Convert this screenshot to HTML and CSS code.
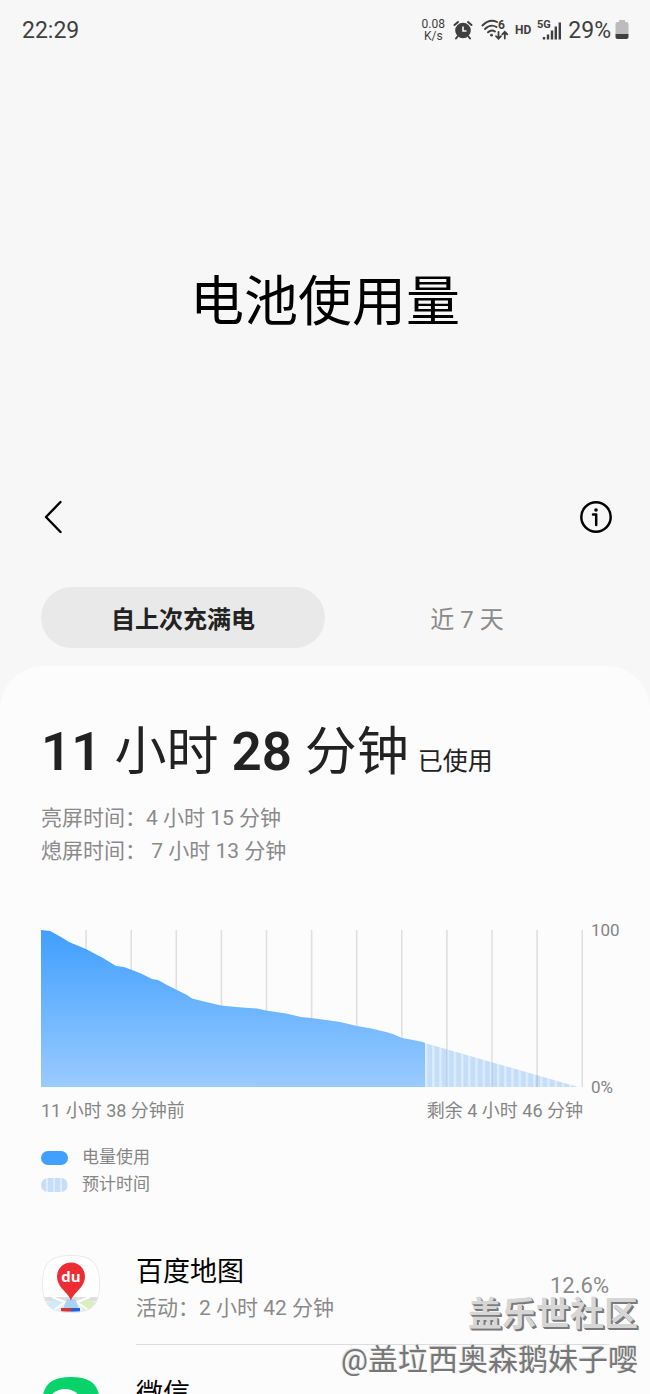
FILE: index.html
```html
<!DOCTYPE html>
<html lang="zh-CN">
<head>
<meta charset="utf-8">
<meta name="viewport" content="width=device-width, initial-scale=1">
<title>电池使用量</title>
<link rel="stylesheet" href="styles.css">
</head>
<body>
<div class="screen">
  <header class="status">
    <time class="status-text">22:29</time>
    <div class="status-icons">
      <span class="speed">0.08<br>K/s</span>
      <svg class="alarm" width="20" height="20" viewBox="0 0 20 20" aria-label="闹钟">
        <circle cx="10" cy="10.5" r="7.8" fill="#3f3f3f"/>
        <path d="M1.5 5 5 2M18.5 5 15 2M4.5 16.500 3 18.500M15.500 16.500 17 18.500" stroke="#3f3f3f" stroke-width="2" stroke-linecap="round"/>
        <path d="M10 6.500V11h3.500" fill="none" stroke="#f7f7f7" stroke-width="1.600"/>
      </svg>
      <svg class="wifi" width="28" height="22" viewBox="0 0 28 22" aria-label="Wi-Fi 6">
        <g fill="none" stroke="#3f3f3f" stroke-width="1.900" stroke-linecap="round">
          <path d="M1.500 6.500Q8.500-.5 16 3"/><path d="M4 10Q9.500 4.500 15.500 8"/><path d="M7 13.300Q10.500 10 14 12.500"/>
          <path d="M17.500 13v6.500M15 17.200l2.500 2.500L20 17.200M23.800 19.500V13M21.300 15.300l2.500-2.500 2.500 2.500" stroke-width="1.800"/>
        </g>
        <circle cx="10.500" cy="16.200" r="1.400" fill="#3f3f3f"/>
        <text class="wifi-gen" x="17" y="10">6</text>
      </svg>
      <span class="hd">HD</span>
      <svg class="signal" width="25" height="22" viewBox="0 0 25 22" aria-label="5G">
        <text class="signal-gen" x="0" y="9">5G</text>
        <path d="M7 18v2.500M11 15.500v5M15 11.500v9M18.800 7.500v13M22.800 3.500v17" stroke="#3f3f3f" stroke-width="2.400"/>
      </svg>
      <div class="battery">
        <span class="status-text">29%</span>
        <svg width="14" height="20" viewBox="0 0 14 20" aria-label="电池">
          <path d="M4 0h6v2h1.500Q13.500 2 13.500 4v10H.5V4q0-2 2-2H4z" fill="#bcbcbc"/>
          <path d="M.5 14h13v3q0 2-2 2h-9q-2 0-2-2z" fill="#3f3f3f"/>
        </svg>
      </div>
    </div>
  </header>

  <h1 class="title">电池使用量</h1>

  <nav class="toolbar">
    <button class="icon-button" type="button" aria-label="返回">
      <svg width="20" height="34" viewBox="0 0 20 34"><path d="M17.500 2 3 17l14.500 15" fill="none" stroke="#000" stroke-width="2.400" stroke-linecap="round" stroke-linejoin="round"/></svg>
    </button>
    <button class="icon-button" type="button" aria-label="信息">
      <svg width="34" height="34" viewBox="0 0 34 34"><circle cx="17" cy="17" r="14.700" fill="none" stroke="#000" stroke-width="2.500"/><circle cx="17" cy="10" r="1.800"/><path d="M14 14.500h3.200v10.500" fill="none" stroke="#000" stroke-width="2.500" stroke-linecap="round" stroke-linejoin="round"/></svg>
    </button>
  </nav>

  <div class="tabs">
    <button class="tab tab-active" type="button">自上次充满电</button>
    <button class="tab" type="button">近 7 天</button>
  </div>

  <main class="card">
    <h2 class="total"><b>11</b> 小时 <b>28</b> 分钟<small>已使用</small></h2>
    <p class="detail">亮屏时间：4 小时 15 分钟</p>
    <p class="detail">熄屏时间：&nbsp;7 小时 13 分钟</p>

    <section class="chart">
      <svg class="plot" viewBox="0 0 542 157" role="img" aria-label="电量曲线">
        <defs>
          <linearGradient id="used" x1="0" y1="0" x2="0" y2="1"><stop offset="0" stop-color="#409fff"/><stop offset="1" stop-color="#99cbff"/></linearGradient>
          <pattern id="stripes" x="384" width="7.200" height="10" patternUnits="userSpaceOnUse"><rect width="7.200" height="10" fill="#409fff" fill-opacity=".16"/><rect x="2.300" width="4.900" height="10" fill="#3d8fe8" fill-opacity=".16"/></pattern>
        </defs>
        <path d="M45.100 0v157M90.200 0v157M135.300 0v157M180.400 0v157M225.500 0v157M270.600 0v157M315.700 0v157M360.800 0v157M405.900 0v157M451 0v157M496.100 0v157M541.200 0v157" stroke="#e0e0e0" stroke-width="1.600"/>
        <path d="M0 0 9 1 20 7 28 12 45 19 62 28 75 36 83 37 91 40 101 44 111 49 117 50 126 55 136 60 146 65 151 68.500 165 72 180 75.500 195 77 216 78.500 225 80.500 245 83.500 260 87 270 88 285 90 299 92 316 96 330 98.500 345 102 352 104 361 108 372 110 382 112 384 113V157H0z" fill="url(#used)"/>
        <path d="M384 113 537 157H384z" fill="url(#stripes)"/>
      </svg>
      <div class="scale"><span>100</span><span>0%</span></div>
      <div class="range"><span>11 小时 38 分钟前</span><span>剩余 4 小时 46 分钟</span></div>
    </section>

    <ul class="legend">
      <li><i class="swatch"></i>电量使用</li>
      <li><i class="swatch swatch-striped"></i>预计时间</li>
    </ul>

    <ul class="apps">
      <li class="app">
        <svg class="app-icon" viewBox="0 0 58 58" aria-hidden="true">
          <defs><clipPath id="tile"><path d="M29 .5C50 .5 57.500 8 57.500 29S50 57.500 29 57.500.5 50 .5 29 8 .5 29 .5z"/></clipPath></defs>
          <g clip-path="url(#tile)">
            <path fill="#fff" d="M0 0h58v58H0z"/>
            <path d="M0 42h58v4H0z" fill="#dedede"/><path d="M0 46h58v12H0z" fill="#edf1ee"/>
            <path d="M0 49 12 45h11L13 58H0z" fill="#cfebf8"/><path d="M35 45h11l12 4v9H43z" fill="#d9efc1"/>
            <path d="M10 42 23 47 8 58M48 42 35 47 50 58" fill="none" stroke="#fff" stroke-width="2"/>
            <path d="M25 44h8l6 14H19z" fill="#a8d4f0"/>
            <path d="M19 53h10v3.500H19z" fill="#df3038"/><path d="M29 53h9v3.500h-9z" fill="#2463d5"/>
          </g>
          <path d="M29 .5C50 .5 57.500 8 57.500 29S50 57.500 29 57.500.5 50 .5 29 8 .5 29 .5z" fill="none" stroke="#e9e9e9"/>
          <path d="M29 46C27.500 38 15 33 15 21.500a14 14 0 0 1 28 0C43 33 30.500 38 29 46z" fill="#ed2d34"/>
          <text class="pin-text" x="29" y="27" text-anchor="middle">du</text>
        </svg>
        <div class="app-body">
          <div class="app-info"><h3 class="app-name">百度地图</h3><p class="app-time">活动：2 小时 42 分钟</p></div>
          <span class="app-share">12.6%</span>
        </div>
      </li>
      <li class="app">
        <svg class="app-icon" viewBox="0 0 58 58" aria-hidden="true">
          <path d="M29 0C50 0 58 8 58 29S50 58 29 58 0 50 0 29 8 0 29 0z" fill="#08d36b"/>
          <ellipse cx="23" cy="25" rx="16" ry="13" fill="#fff"/><ellipse cx="38" cy="35" rx="13" ry="11" fill="#fff"/>
        </svg>
        <div class="app-body"><div class="app-info"><h3 class="app-name">微信</h3></div></div>
      </li>
    </ul>
  </main>

  <aside class="watermark"><strong>盖乐世社区</strong><span>@盖垃西奥森鹅妹子嘤</span></aside>
</div>
</body>
</html>
```
FILE: styles.css
```css
* { box-sizing: border-box; }
body, h1, h2, h3, p, ul { margin: 0; padding: 0; }
ul { list-style: none; }
body {
  background: #f7f7f7;
  color: #222;
  font-family: Roboto, "Noto Sans CJK SC", sans-serif;
}
button { border: 0; background: none; font: inherit; color: inherit; padding: 0; cursor: pointer; }
svg { display: block; flex: none; }

.screen {
  position: relative;
  display: flex;
  flex-direction: column;
  height: 100vh;
  overflow: hidden;
}

.status {
  display: flex;
  flex: none;
  justify-content: space-between;
  align-items: center;
  height: 60px;
  padding: 0 21px 0 22px;
  color: #3f3f3f;
}
.status-text { font-size: 23px; }
.status-icons { display: flex; align-items: center; gap: 6px; }
.battery { display: flex; align-items: center; gap: 4px; }
.speed { font-size: 12px; line-height: 12px; text-align: center; }
.alarm { margin: 0 2px; }
.hd { font-size: 12px; font-weight: 700; }
.wifi-gen { font-size: 12px; font-weight: 700; fill: #3f3f3f; }
.signal-gen { font-size: 11px; font-weight: 700; fill: #3f3f3f; }

.title {
  flex: none;
  padding: 203px 0 134px;
  color: #000;
  font-size: 54px;
  font-weight: 400;
  line-height: 80px;
  text-align: center;
}

.toolbar {
  display: flex;
  flex: none;
  justify-content: space-between;
  align-items: center;
  height: 80px;
  padding: 0 37px 0 43px;
}

.tabs {
  display: grid;
  flex: none;
  grid-template-columns: 1fr 1fr;
  padding: 30px 41px 18px;
}
.tab {
  height: 61px;
  border-radius: 31px;
  color: #8a8a8a;
  font-size: 24px;
}
.tab-active { background: #e9e9e9; color: #222; font-weight: 700; }

.card {
  flex: 1 0 auto;
  padding: 46px 30px 0 41px;
  border-radius: 44px 44px 0 0;
  background: #fcfcfc;
}
.total { font-size: 52px; font-weight: 400; line-height: 80px; }
.total b { font-size: 53px; font-weight: 600; }
.total small { margin-left: 9px; font-size: 25px; }
.detail { color: #8a8a8a; font-size: 21px; line-height: 33px; }

.chart {
  display: grid;
  grid-template-columns: 1fr 29px;
  column-gap: 8px;
  margin-top: 62px;
  color: #858585;
  font-size: 18px;
}
.plot { width: 100%; height: auto; }
.scale {
  display: flex;
  flex-direction: column;
  justify-content: space-between;
  margin: -12px 0;
  font-size: 17px;
  line-height: 24px;
}
.range { display: flex; justify-content: space-between; margin-top: 10px; line-height: 27px; }

.legend { margin-top: 20px; color: #858585; font-size: 17px; line-height: 27px; }
.legend li { display: flex; align-items: center; gap: 14px; }
.swatch { width: 27px; height: 14px; border-radius: 7px; background: #409fff; }
.swatch-striped { background: repeating-linear-gradient(90deg, #c7def8 0 5px, #deedfd 5px 7px); }

.apps { margin: 40px 0 0; }
.app { display: flex; gap: 36px; height: 122px; padding-left: 1px; }
.app-icon { width: 58px; height: 58px; margin-top: 17px; }
.app-body {
  display: flex;
  flex: 1;
  justify-content: space-between;
  height: 107px;
  margin-right: 11px;
  border-bottom: 1px solid #dcdcdc;
}
.app-name { margin-top: 14px; color: #000; font-size: 27px; font-weight: 400; line-height: 40px; }
.app-time { color: #8a8a8a; font-size: 21px; line-height: 32px; }
.app-share { margin-top: 32px; color: #8a8a8a; font-size: 22px; line-height: 32px; }
.pin-text { fill: #fff; font-family: "Open Sans", sans-serif; font-size: 15px; font-weight: 700; }

.watermark {
  position: absolute;
  right: 12px;
  bottom: 12px;
  display: flex;
  flex-direction: column;
  align-items: flex-end;
  color: #777;
  font-size: 30px;
  line-height: 45px;
  text-shadow: -1px -1px 0 #e0e0e0;
}
.watermark strong { color: #d6d6d6; font-size: 34px; text-shadow: 1px 1px 0 #7a7a7a, 2px 2px 0 #7a7a7a; }
```
